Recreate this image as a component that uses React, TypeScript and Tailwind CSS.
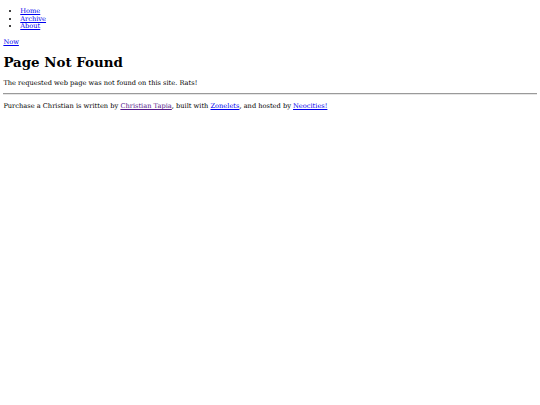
import React from "react";

const serif = "font-['DejaVu_Serif',serif]";

export default function App() {
  return (
    <div className={`min-h-[405px] bg-white px-[3.375px] py-[0.1px] text-[6.65px] leading-[7.86px] text-black ${serif}`}>
      {/* Nav */}
      <ul className="mt-[7.6px] mb-[7.8px] list-disc pl-[16.875px]">
        <li>
          <a href="#" className="text-[#0000ee] underline">Home</a>
        </li>
        <li>
          <a href="#" className="text-[#0000ee] underline">Archive</a>
        </li>
        <li>
          <a href="#" className="text-[#0000ee] underline">About</a>
        </li>
      </ul>

      <p className="mt-[7.8px] mb-[7.2px]">
        <a href="#" className="text-[#0000ee] underline">Now</a>
      </p>

      <h1 className="mt-[7.8px] mb-[9.9px] text-[13.4px] font-bold leading-[15.7px]">Page Not Found</h1>

      <p className="mt-[7.2px] mb-[5.2px]">The requested web page was not found on this site. Rats!</p>

      <hr className="my-[3.375px] border-t border-b-[0.5px] border-t-[#9a9a9a] border-b-[#e6e6e6]" />

      <p className="mt-[7.6px] mb-[6.6px]">
        Purchase a Christian is written by{" "}
        <a href="#" className="text-[#551a8b] underline">Christian Tapia</a>, built with{" "}
        <a href="#" className="text-[#0000ee] underline">Zonelets</a>, and hosted by{" "}
        <a href="#" className="text-[#0000ee] underline">Neocities!</a>
      </p>
    </div>
  );
}
